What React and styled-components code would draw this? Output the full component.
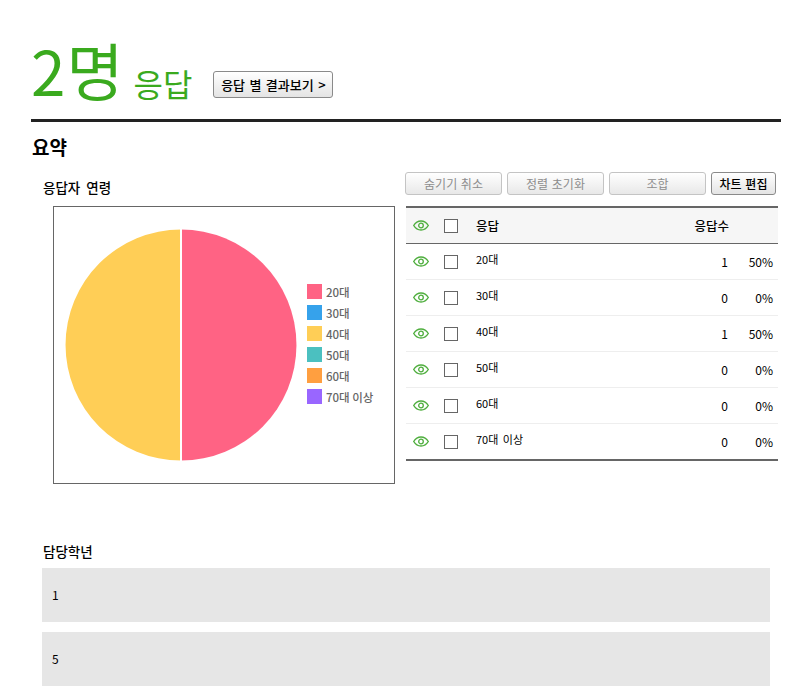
import React from "react";
import styled, { createGlobalStyle } from "styled-components";

const Global = createGlobalStyle`
  html, body { margin: 0; padding: 0; background: #fff; height: 695px; overflow: hidden; }
  body { font-family: "Noto Sans CJK KR", "Liberation Sans", sans-serif; color: #000; }
`;
const Page = styled.div`
  width: 750px;
  padding: 0 9px 0 31px;
`;
const Header = styled.header`
  height: 119px;
  display: flex;
  align-items: flex-end;
  border-bottom: 3px solid #222;
  box-sizing: content-box;
`;
const Count = styled.span`
  font-size: 62px;
  line-height: 60px;
  color: #3aaa1e;
  margin-bottom: 20px;
  letter-spacing: 1px;
  font-weight: 400;
`;
const CountLabel = styled.span`
  font-size: 32px;
  line-height: 30px;
  color: #3aaa1e;
  margin: 0 0 21px 9px;
`;
const Btn = styled.button`
  font-family: inherit;
  font-size: 12.5px;
  line-height: 16px;
  padding: 0;
  flex: none;
  height: 27px;
  width: ${p => p.$w}px;
  border: 1px solid ${p => (p.$disabled ? "#c4c4c4" : "#8a8a8a")};
  border-radius: 3px;
  background: linear-gradient(#fff, ${p => (p.$disabled ? "#e8e8e8" : "#e4e4e4")});
  color: ${p => (p.$disabled ? "#8d8d8d" : "#000")};
  font-weight: ${p => (p.$disabled ? 400 : 500)};
  word-spacing: 1px;
`;
const ResultBtn = styled(Btn)`
  margin: 0 0 21px 21px;
  font-size: 13px;
  word-spacing: 1.5px;
`;
const SectionTitle = styled.h2`
  margin: 13px 0 0 1px;
  font-size: 19px;
  line-height: 24px;
  font-weight: 700;
`;
const Columns = styled.div`
  display: flex;
  height: 360px;
  margin-top: 12px;
`;
const Left = styled.section`
  width: 364px;
  padding: 7px 0 0 12px;
  box-sizing: border-box;
`;
const SubTitle = styled.h3`
  margin: 0;
  font-size: 13.5px;
  line-height: 18px;
  font-weight: 500;
  word-spacing: 3px;
`;
const ChartBox = styled.div`
  margin: 10px 0 0 10px;
  width: 340px;
  height: 276px;
  border: 1px solid #666;
  display: flex;
  align-items: center;
`;
const Pie = styled.svg`
  width: 234px;
  height: 234px;
  margin-left: 10px;
  flex: none;
`;
const Legend = styled.ul`
  list-style: none;
  margin: 0 0 2px 9px;
  padding: 0;
  display: flex;
  flex-direction: column;
  gap: 6px;
`;
const LegendItem = styled.li`
  display: flex;
  align-items: center;
  gap: 4px;
  height: 15px;
  font-size: 11.5px;
  font-weight: 500;
  color: #666;
  white-space: nowrap;
  &::before {
    content: "";
    width: 15px;
    height: 15px;
    background: ${p => p.$c};
  }
`;
const Right = styled.section`
  width: 372px;
  margin-left: 11px;
  padding-top: 1px;
`;
const Toolbar = styled.div`
  display: flex;
  gap: 5px;
  margin-left: -1px;
`;
const ToolBtn = styled(Btn)`
  height: 23px;
  font-size: 12px;
`;
const Table = styled.div`
  margin-top: 11px;
  border-top: 2px solid #666;
  border-bottom: 2px solid #666;
`;
const Row = styled.div`
  display: grid;
  grid-template-columns: 30px 32px 1fr 73px 46px;
  align-items: center;
  height: 35px;
  font-size: 11px;
  background: ${p => (p.$head ? "#f6f6f6" : "#fff")};
  border-bottom: 1px solid ${p => (p.$head ? "#666" : "#eee")};
  &:last-child { border-bottom: none; }
`;
const EyeCell = styled.div`
  display: flex;
  justify-content: center;
`;
const Box = styled.span`
  display: block;
  width: 12px;
  height: 12px;
  border: 1px solid #666;
  background: #fff;
  margin-left: 8px;
`;
const Label = styled.div`
  padding-left: 8px;
  font-size: ${p => (p.$head ? 12.5 : 11)}px;
  font-weight: ${p => (p.$head ? 500 : 400)};
  word-spacing: 2px;
  position: relative;
  top: ${p => (p.$head ? 0 : -3)}px;
`;
const Num = styled.div`
  text-align: right;
  font-size: ${p => (p.$head ? 12.5 : 12)}px;
  font-weight: ${p => (p.$head ? 500 : 400)};
  padding-right: ${p => (p.$head ? 3 : 4)}px;
`;
const Pct = styled.div`
  text-align: right;
  font-size: 12px;
  padding-right: 5px;
`;
const Question = styled.section`
  margin: 0 0 0 11px;
  width: 728px;
`;
const QTitle = styled(SubTitle)`
  margin: 10px 0 7px 1px;
  line-height: 20px;
  word-spacing: 0;
`;
const Answer = styled.div`
  height: 52px;
  padding: 0 0 2px 10px;
  background: #e6e6e6;
  display: flex;
  align-items: center;
  font-size: 12px;
  margin-bottom: 10px;
`;

const Eye = () => (
  <svg width="16" height="11" viewBox="0 0 16 11" fill="none" stroke="#4fae3e">
    <path d="M.7 5.500C2.600 2.400 5 1 8 1s5.400 1.400 7.300 4.500C13.400 8.600 11 10 8 10S2.600 8.600.7 5.500z" strokeWidth="1.400" />
    <circle cx="8" cy="5.500" r="2.300" strokeWidth="1.300" />
  </svg>
);

const legend = [
  ["20대", "#ff6384"],
  ["30대", "#36a2eb"],
  ["40대", "#ffce56"],
  ["50대", "#4bc0c0"],
  ["60대", "#ff9f40"],
  ["70대 이상", "#9966ff"],
];
const rows = [
  ["20대", 1, "50%"],
  ["30대", 0, "0%"],
  ["40대", 1, "50%"],
  ["50대", 0, "0%"],
  ["60대", 0, "0%"],
  ["70대 이상", 0, "0%"],
];

export default function App() {
  return (
    <Page>
      <Global />
      <Header>
        <Count>2명</Count>
        <CountLabel>응답</CountLabel>
        <ResultBtn $w={120}>응답 별 결과보기 &gt;</ResultBtn>
      </Header>
      <SectionTitle>요약</SectionTitle>
      <Columns>
        <Left>
          <SubTitle>응답자 연령</SubTitle>
          <ChartBox>
            <Pie viewBox="0 0 234 234">
              <path d="M117 1.500A115.500 115.500 0 0 1 117 232.500Z" fill="#ff6384" />
              <path d="M117 1.500A115.500 115.500 0 0 0 117 232.500Z" fill="#ffce56" />
              <path d="M117 1V233" stroke="#fff" strokeWidth="2" />
            </Pie>
            <Legend>
              {legend.map(([t, c]) => (
                <LegendItem key={t} $c={c}>{t}</LegendItem>
              ))}
            </Legend>
          </ChartBox>
        </Left>
        <Right>
          <Toolbar>
            <ToolBtn $disabled $w={97}>숨기기 취소</ToolBtn>
            <ToolBtn $disabled $w={97}>정렬 초기화</ToolBtn>
            <ToolBtn $disabled $w={97}>조합</ToolBtn>
            <ToolBtn $w={65}>차트 편집</ToolBtn>
          </Toolbar>
          <Table>
            <Row $head>
              <EyeCell><Eye /></EyeCell>
              <div><Box /></div>
              <Label $head>응답</Label>
              <Num $head>응답수</Num>
              <Pct />
            </Row>
            {rows.map(([t, n, p]) => (
              <Row key={t}>
                <EyeCell><Eye /></EyeCell>
                <div><Box /></div>
                <Label>{t}</Label>
                <Num>{n}</Num>
                <Pct>{p}</Pct>
              </Row>
            ))}
          </Table>
        </Right>
      </Columns>
      <Question>
        <QTitle>담당학년</QTitle>
        <Answer>1</Answer>
        <Answer>5</Answer>
      </Question>
    </Page>
  );
}
